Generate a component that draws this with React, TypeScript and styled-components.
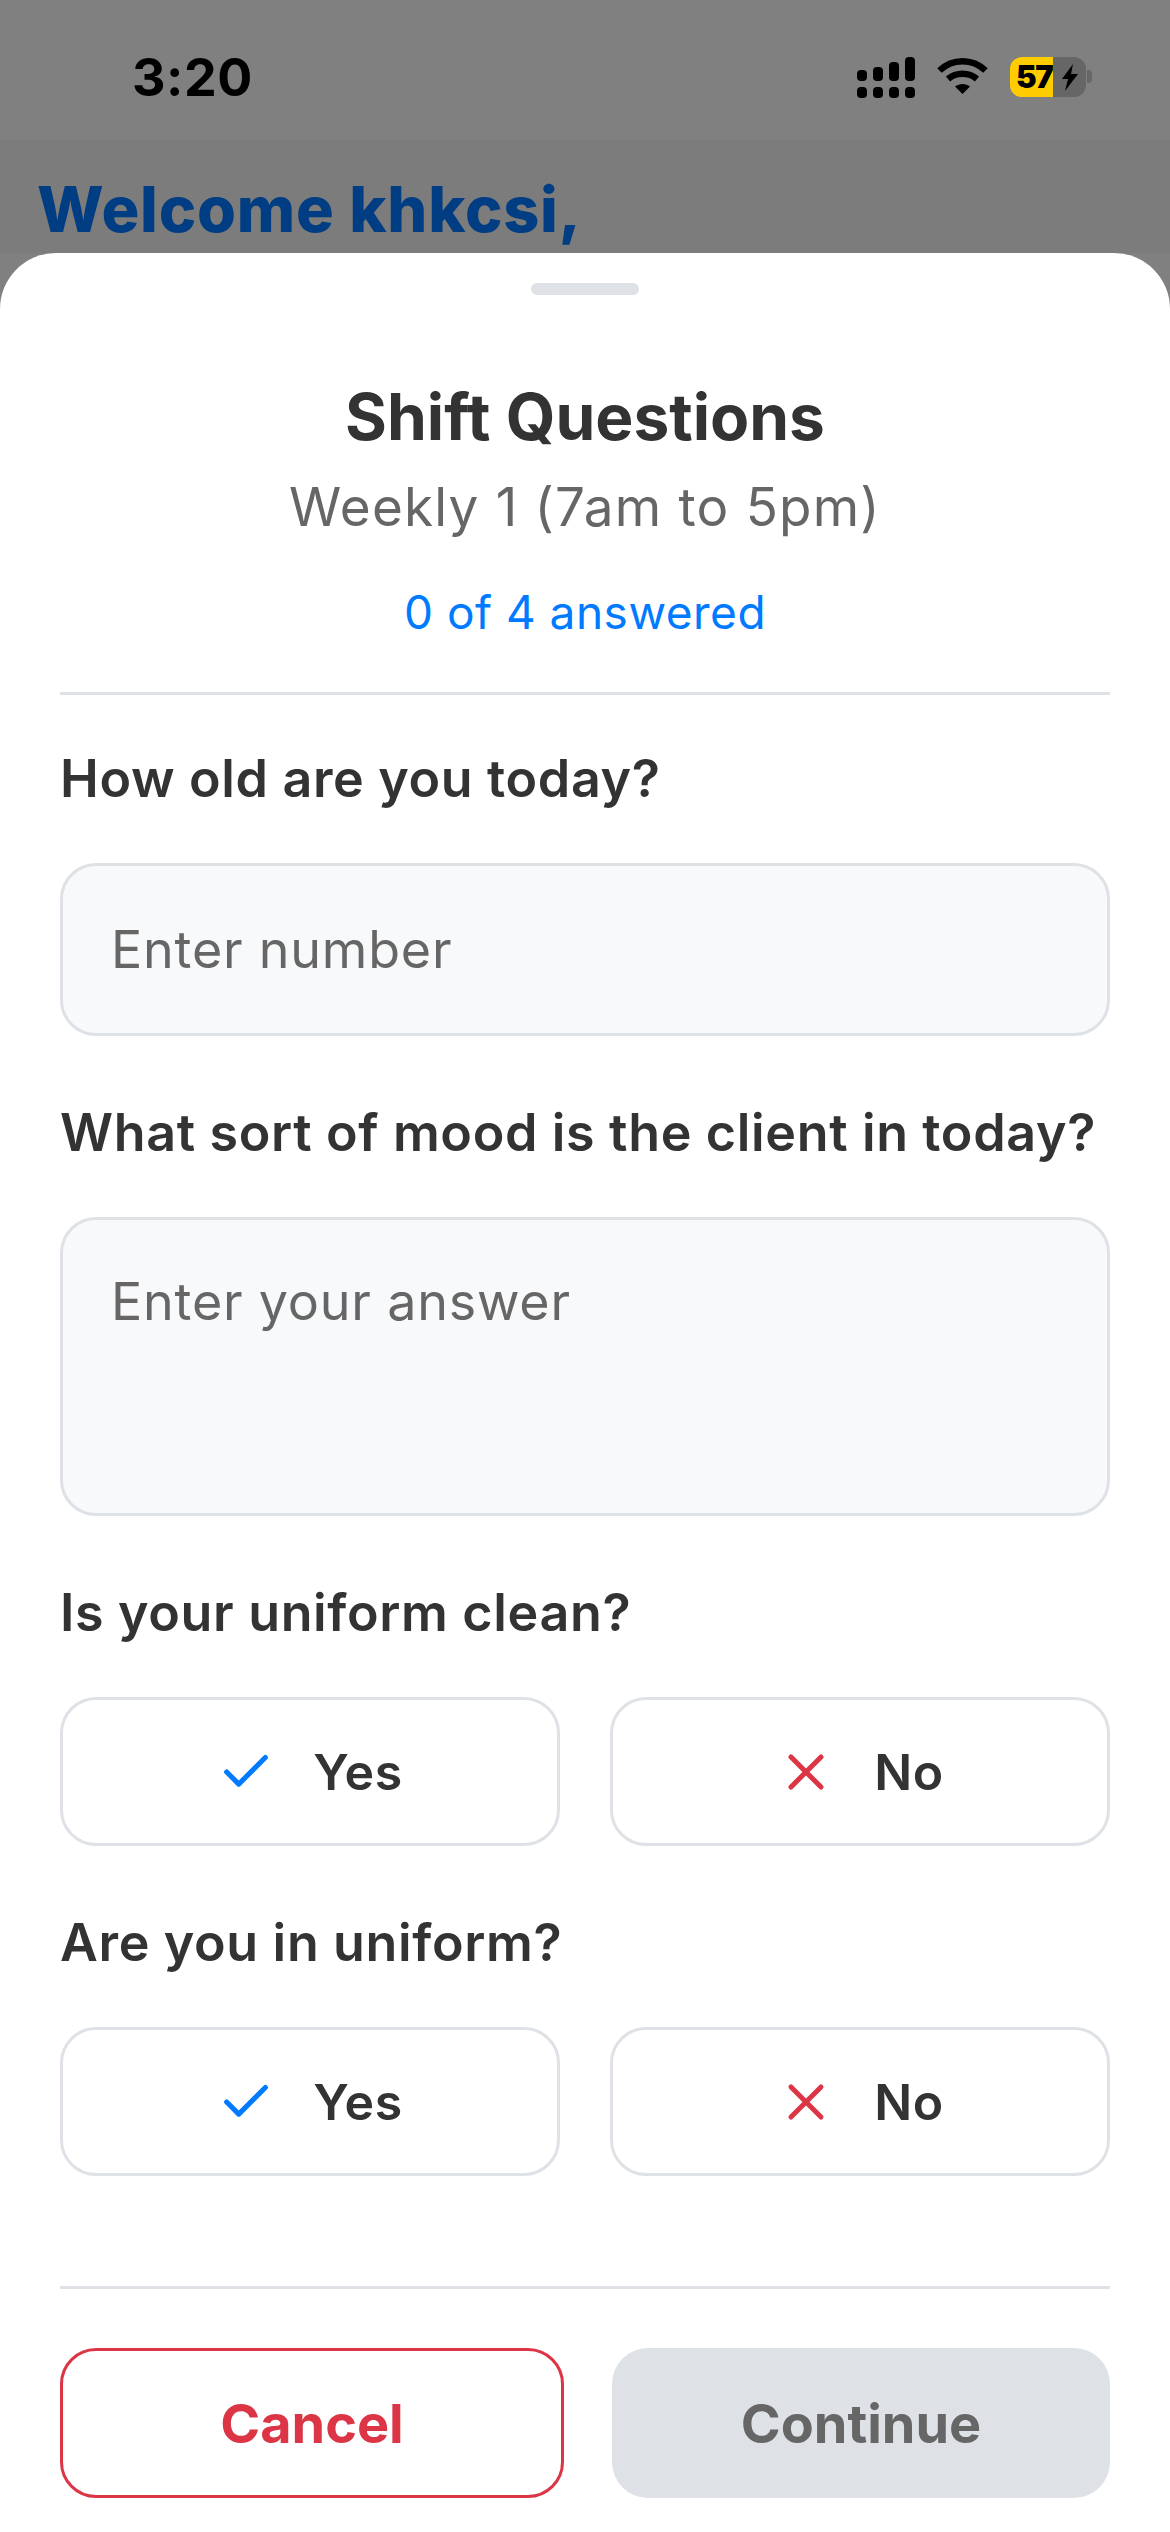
import React from 'react'
import styled, { createGlobalStyle } from 'styled-components'
import { Check, X } from 'lucide-react'

const Global = createGlobalStyle`
  html, body { margin: 0; padding: 0; background: #808080; }
  * { box-sizing: border-box; }
`

const FONT = `Inter, "Noto Sans", sans-serif`

const questions = ['Is your uniform clean?', 'Are you in uniform?']

const SignalIcon = () => (
  <svg width="58" height="41" viewBox="0 0 58 41" fill="#000">
    <rect x="0" y="13" width="10" height="11" rx="4" />
    <rect x="16" y="10" width="10" height="14" rx="4" />
    <rect x="32" y="5" width="10" height="19" rx="4" />
    <rect x="48" y="0" width="10" height="24" rx="4" />
    <rect x="0" y="30" width="10" height="11" rx="4" />
    <rect x="16" y="30" width="10" height="11" rx="4" />
    <rect x="32" y="30" width="10" height="11" rx="4" />
    <rect x="48" y="30" width="10" height="11" rx="4" />
  </svg>
)

const WifiIcon = () => (
  <svg width="51" height="37" viewBox="0 0 51 37" fill="none" stroke="#000" strokeWidth="6.5">
    <path d="M2.5 13.5C15.5 1 35.5 1 48.500 13.500" />
    <path d="M11 22C19 15 32 15 40 22" />
    <path d="M18 29.500C22 26 29 26 33 29.500L25.500 37Z" fill="#000" stroke="none" />
  </svg>
)

const BoltIcon = () => (
  <svg width="18" height="27" viewBox="0 0 18 27" fill="#000">
    <path d="M12 0 1 15h6l-3 12L17 10h-7z" />
  </svg>
)

const App = () => (
  <Page>
    <Global />
    <Backdrop>
      <StatusBar>
        <Time>3:20</Time>
        <StatusIcons>
          <SignalIcon />
          <WifiIcon />
          <Battery>
            <BatteryFill>57</BatteryFill>
            <BatteryRest><BoltIcon /></BatteryRest>
            <BatteryNub />
          </Battery>
        </StatusIcons>
      </StatusBar>
      <Welcome>Welcome khkcsi,</Welcome>
    </Backdrop>

    <Sheet>
      <Handle />
      <Title>Shift Questions</Title>
      <Subtitle>Weekly 1 (7am to 5pm)</Subtitle>
      <Progress>0 of 4 answered</Progress>
      <Divider />

      <Label $top={52}>How old are you today?</Label>
      <Field height={173}>Enter number</Field>

      <Label>What sort of mood is the client in today?</Label>
      <Field height={299} $top>Enter your answer</Field>

      {questions.map((q) => (
        <React.Fragment key={q}>
          <Label>{q}</Label>
          <ChoiceRow>
            <Choice>
              <Check size={58} color="#007bff" strokeWidth={2.1} />
              Yes
            </Choice>
            <Choice>
              <X size={60} color="#dc3545" strokeWidth={2} />
              No
            </Choice>
          </ChoiceRow>
        </React.Fragment>
      ))}

      <FooterDivider />
      <Footer>
        <CancelButton>Cancel</CancelButton>
        <ContinueButton>Continue</ContinueButton>
      </Footer>
    </Sheet>
  </Page>
)

const Page = styled.div`
  width: 1170px;
  height: 2532px;
  overflow: hidden;
  display: flex;
  flex-direction: column;
  font-family: ${FONT};
  background: #808080;
`

const Backdrop = styled.div`
  height: 253px;
  flex-shrink: 0;
  background: linear-gradient(#808080 0, #808080 140px, #7b7c7b 140px, #7b7c7b 100%);
`

const StatusBar = styled.div`
  height: 140px;
  display: flex;
  justify-content: space-between;
  padding: 57px 84px 0 132px;
`

const Time = styled.div`
  font-size: 52px;
  line-height: 42px;
  font-weight: 700;
  color: #000;
  letter-spacing: 0.5px;
`

const StatusIcons = styled.div`
  display: flex;
  align-items: flex-start;
  gap: 22px;
`

const Battery = styled.div`
  position: relative;
  display: flex;
  width: 76px;
  height: 40px;
  border-radius: 12px;
`

const BatteryFill = styled.div`
  width: 43px;
  height: 40px;
  background: #ffcc00;
  border-radius: 12px 0 0 12px;
  font-size: 31px;
  line-height: 40px;
  font-weight: 900;
  color: #000;
  padding-left: 6px;
  white-space: nowrap;
  letter-spacing: -1.5px;
`

const BatteryRest = styled.div`
  width: 33px;
  height: 40px;
  background: #666;
  border-radius: 0 12px 12px 0;
  display: flex;
  align-items: center;
  justify-content: center;
`

const BatteryNub = styled.div`
  position: absolute;
  right: -6px;
  top: 13px;
  width: 5px;
  height: 13px;
  background: #666;
  border-radius: 0 4px 4px 0;
`

const Welcome = styled.div`
  margin: 31px 0 0 37px;
  font-size: 63px;
  line-height: 76px;
  font-weight: 800;
  color: #003d82;
  letter-spacing: 0.8px;
`

const Sheet = styled.div`
  flex: 1;
  background: #fff;
  border-radius: 56px 56px 0 0;
  padding: 30px 60px 0;
  display: flex;
  flex-direction: column;
`

const Handle = styled.div`
  align-self: center;
  width: 108px;
  height: 12px;
  border-radius: 6px;
  background: #dee2e6;
`

const Title = styled.div`
  margin-top: 87px;
  text-align: center;
  font-size: 64px;
  line-height: 70px;
  font-weight: 700;
  color: #333;
`

const Subtitle = styled.div`
  margin-top: 23px;
  text-align: center;
  font-size: 53px;
  line-height: 64px;
  color: #666;
  letter-spacing: 1.2px;
`

const Progress = styled.div`
  margin-top: 45px;
  text-align: center;
  font-size: 46px;
  line-height: 56px;
  color: #007bff;
  letter-spacing: 0.5px;
`

const Divider = styled.div`
  margin-top: 52px;
  height: 3px;
  background: #dee2e6;
`

const Label = styled.div<{ $top?: number }>`
  margin-top: ${({ $top }) => $top ?? 65}px;
  font-size: 52px;
  line-height: 64px;
  font-weight: 600;
  color: #333;
  white-space: nowrap;
  letter-spacing: 0.65px;
`

const Field = styled.div<{ height: number; $top?: boolean }>`
  margin-top: 52px;
  height: ${({ height }) => height}px;
  background: #f8f9fa;
  border: 3px solid #dee2e6;
  border-radius: 36px;
  padding: ${({ $top }) => ($top ? '50px' : '0')} 48px 0;
  display: flex;
  align-items: ${({ $top }) => ($top ? 'flex-start' : 'center')};
  font-size: 52px;
  line-height: 64px;
  color: #666;
  letter-spacing: 0.8px;
`

const ChoiceRow = styled.div`
  margin-top: 52px;
  display: grid;
  grid-template-columns: 1fr 1fr;
  gap: 50px;
`

const Choice = styled.div`
  height: 149px;
  border: 3px solid #dee2e6;
  border-radius: 36px;
  background: #fff;
  display: flex;
  align-items: center;
  justify-content: center;
  gap: 38px;
  font-size: 50px;
  font-weight: 600;
  color: #333;
  letter-spacing: 0.5px;
`

const FooterDivider = styled.div`
  margin-top: 110px;
  height: 3px;
  background: #dee2e6;
`

const Footer = styled.div`
  margin-top: 59px;
  display: grid;
  grid-template-columns: 504px 498px;
  justify-content: space-between;
`

const CancelButton = styled.div`
  height: 150px;
  border: 3px solid #dc3545;
  border-radius: 36px;
  display: flex;
  align-items: center;
  justify-content: center;
  font-size: 54px;
  font-weight: 700;
  color: #dc3545;
`

const ContinueButton = styled(CancelButton)`
  border: none;
  background: #dee2e6;
  color: #666;
`

export default App
